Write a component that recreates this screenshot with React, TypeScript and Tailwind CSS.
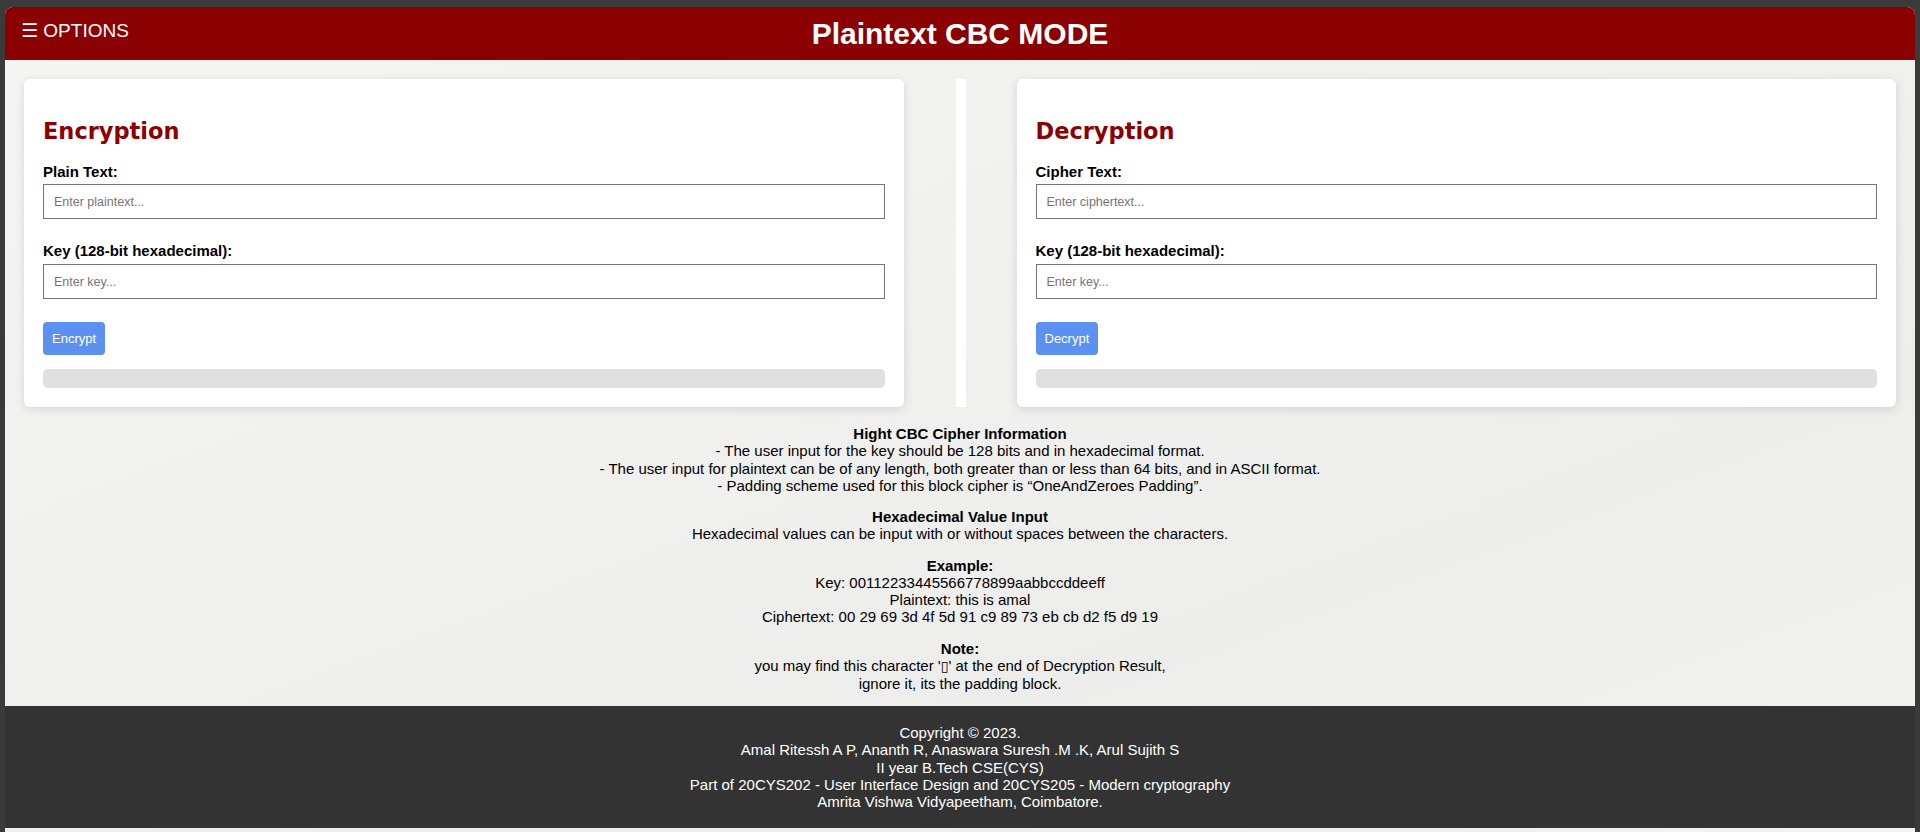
type CardProps = {
  title: string;
  label: string;
  placeholder: string;
  action: string;
};

function CipherCard({ title, label, placeholder, action }: CardProps) {
  return (
    <div className="flex-1 min-w-0 rounded-[6px] bg-white px-[19px] py-[19px] shadow-[0_2px_10px_rgba(0,0,0,0.12)]">
      <h2 className="mt-[20px] font-['DejaVu_Sans',sans-serif] text-[22.5px] font-bold leading-[26px] text-[#8b0000]">
        {title}
      </h2>
      <label className="mt-[19px] block text-[15px] font-bold leading-[17px] text-black">{label}</label>
      <input
        type="text"
        placeholder={placeholder}
        className="mt-[4px] block h-[35px] w-full border border-[#767676] bg-white px-[10px] text-[12.5px] text-black outline-none placeholder:text-[#757575]"
      />
      <label className="mt-[23px] block text-[15px] font-bold leading-[17px] text-black">
        Key (128-bit hexadecimal):
      </label>
      <input
        type="text"
        placeholder="Enter key..."
        className="mt-[5px] block h-[35px] w-full border border-[#767676] bg-white px-[10px] text-[12.5px] text-black outline-none placeholder:text-[#757575]"
      />
      <button className="mt-[23px] block h-[33px] rounded-[4px] bg-[#5c91f1] px-[9px] text-[13px] text-white">
        {action}
      </button>
      <div className="mt-[14px] h-[19px] rounded-[5px] bg-[#e0e0e0]" />
    </div>
  );
}

export default function App() {
  return (
    <div className="h-[832px] w-[1920px] overflow-hidden bg-[#3a3a3a] px-[5px] pt-[7px] font-['Liberation_Sans',Arial,sans-serif]">
      <div className="h-full rounded-t-[8px] bg-[linear-gradient(160deg,#f5f5f4_0%,#f0f0ef_45%,#ededec_70%,#f2f2f1_100%)]">
        {/* top bar */}
        <header className="grid h-[53px] grid-cols-[1fr_auto_1fr] rounded-t-[8px] bg-[#8b0000] text-white">
          <div className="self-start pl-[16px] pt-[12px]">
            <button className="text-[19px] leading-[22px] text-white">
              <span className="font-['DejaVu_Sans',sans-serif]">☰</span> OPTIONS
            </button>
          </div>
          <h1 className="self-center text-[30px] font-bold leading-[34px]">Plaintext CBC MODE</h1>
          <div />
        </header>

        <main className="h-[646px] px-[19px] pt-[19px]">
          <div className="flex">
            <CipherCard title="Encryption" label="Plain Text:" placeholder="Enter plaintext..." action="Encrypt" />
            <div className="ml-[52px] mr-[51px] w-[10px] shrink-0 bg-white" />
            <CipherCard title="Decryption" label="Cipher Text:" placeholder="Enter ciphertext..." action="Decrypt" />
          </div>

          <div className="mt-[18px] text-center text-[15px] leading-[17.25px] text-black">
            <p>
              <b>Hight CBC Cipher Information</b>
              <br />- The user input for the key should be 128 bits and in hexadecimal format.
              <br />- The user input for plaintext can be of any length, both greater than or less than 64 bits, and in
              ASCII format.
              <br />- Padding scheme used for this block cipher is “OneAndZeroes Padding”.
            </p>
            <p className="mt-[14px]">
              <b>Hexadecimal Value Input</b>
              <br />
              Hexadecimal values can be input with or without spaces between the characters.
            </p>
            <p className="mt-[14px]">
              <b>Example:</b>
              <br />
              Key: 00112233445566778899aabbccddeeff
              <br />
              Plaintext: this is amal
              <br />
              Ciphertext: 00 29 69 3d 4f 5d 91 c9 89 73 eb cb d2 f5 d9 19
            </p>
            <p className="mt-[14px]">
              <b>Note:</b>
              <br />
              you may find this character '<span className="font-['DejaVu_Sans',sans-serif] text-[14px]">▯</span>' at
              the end of Decryption Result,
              <br />
              ignore it, its the padding block.
            </p>
          </div>
        </main>

        <footer className="h-[122px] bg-[#333333] pt-[18px] text-center text-[15px] leading-[17.25px] text-white">
          <p>Copyright © 2023.</p>
          <p>Amal Ritessh A P, Ananth R, Anaswara Suresh .M .K, Arul Sujith S</p>
          <p>II year B.Tech CSE(CYS)</p>
          <p>Part of 20CYS202 - User Interface Design and 20CYS205 - Modern cryptography</p>
          <p>Amrita Vishwa Vidyapeetham, Coimbatore.</p>
        </footer>
      </div>
    </div>
  );
}
